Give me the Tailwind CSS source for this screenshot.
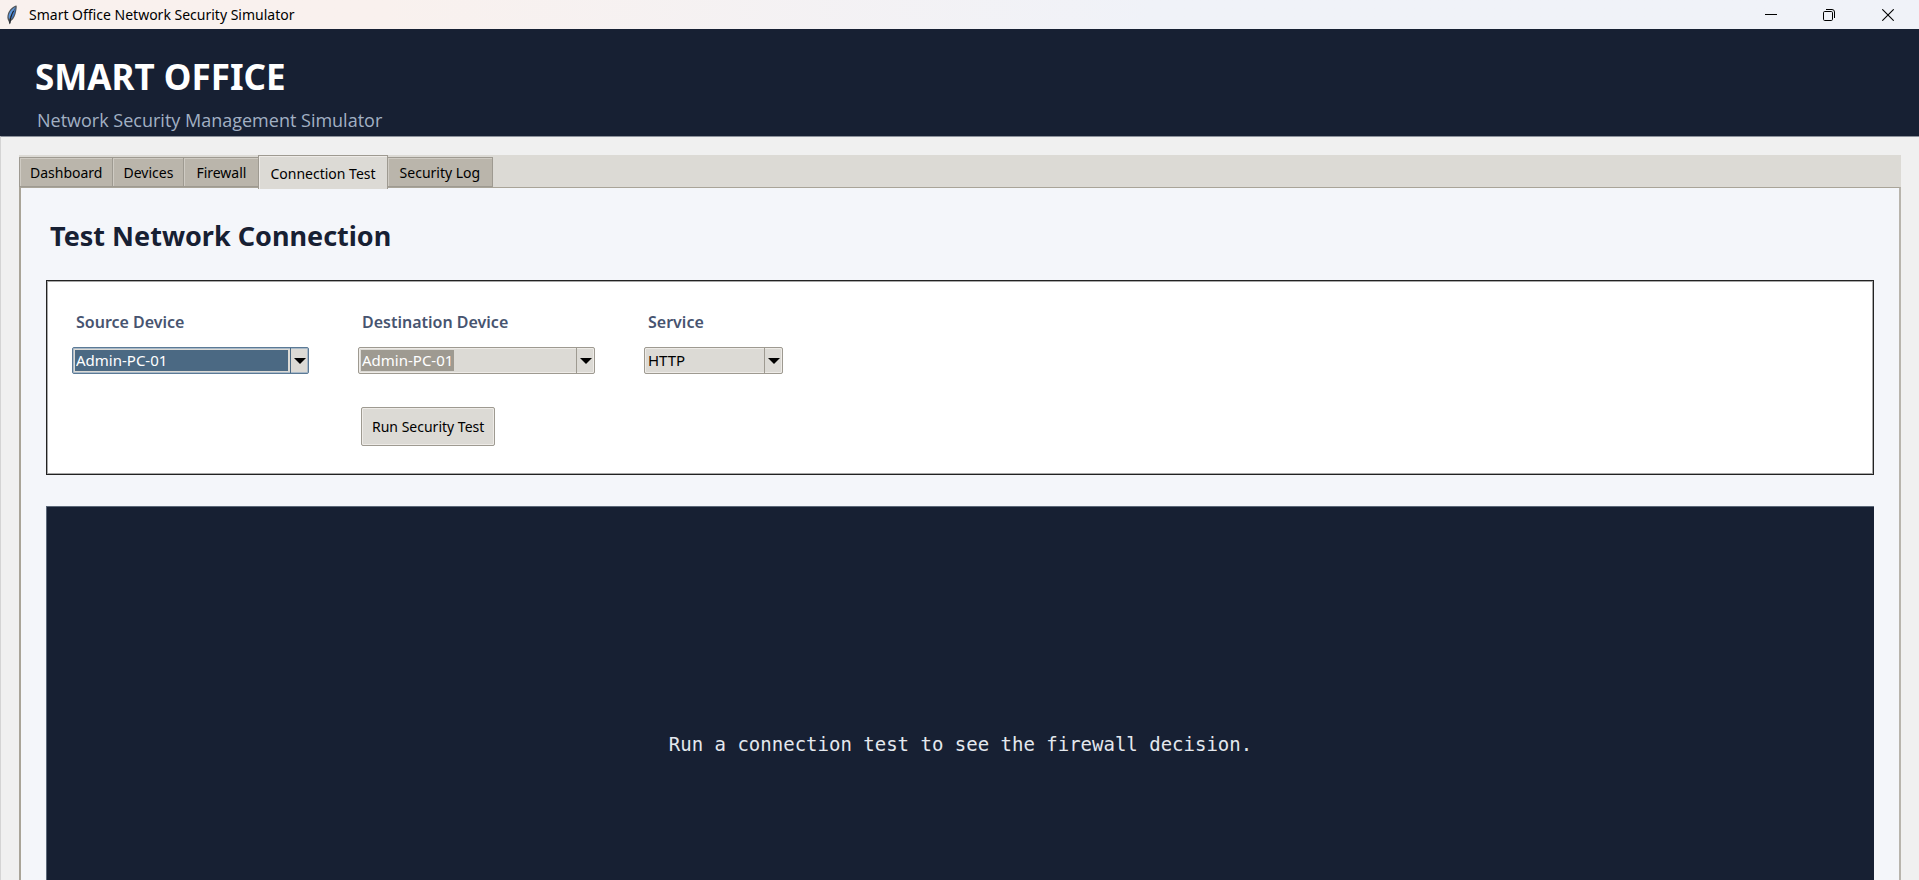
<!DOCTYPE html>
<html lang="en">
<head>
<meta charset="utf-8">
<title>Smart Office Network Security Simulator</title>
<script src="https://cdn.jsdelivr.net/npm/@tailwindcss/browser@4"></script>
</head>
<body class="flex h-screen flex-col overflow-hidden bg-[#f0f0f0] font-['Noto_Sans',sans-serif] text-black">

<!-- Window title bar -->
<div class="flex h-[29px] shrink-0 items-center bg-linear-to-r from-[#f9f1ee] from-20% to-[#f0f2f8] to-60% pl-1.5">
  <svg class="h-5 w-3" viewBox="0 0 12 20" aria-hidden="true">
    <path d="M10.500 .5C7 1 3.500 4.500 2 8.500 1 11.500 1.200 14 2.500 16L3.800 19.500 5 16C8 14 9.500 10 10.200 6 10.600 3.500 11 1.500 10.500 .5Z" fill="#4f5358"/>
    <path d="M9.800 1.800C7 3 4 6 3 9.200 2.400 11.500 2.600 13 3.200 14.200 4.500 11 6.500 6.500 9.800 1.800Z" fill="#5c97dc"/>
    <path d="M9.900 2.500C7.500 6.500 5.500 10.500 4.300 14.800 7 13.300 8.500 9.500 9.200 6Z" fill="#3f78c4"/>
    <path d="M7.500 6C5.800 9 4.500 12 3.800 18.500" fill="none" stroke="#14171c"/>
  </svg>
  <span class="ml-[11px] text-sm">Smart Office Network Security Simulator</span>
  <div class="ml-auto flex h-full">
    <button type="button" aria-label="Minimize" class="flex w-[60px] items-center justify-center">
      <svg class="size-3" viewBox="0 0 12 12"><path d="M0 5.500H12" stroke="#000"/></svg>
    </button>
    <button type="button" aria-label="Restore" class="flex w-14 items-center justify-center">
      <svg class="size-3" viewBox="0 0 12 12" fill="none" stroke="#000"><rect x=".5" y="2.500" width="9" height="9" rx="1.200"/><path d="M3 .5H9A2.500 2.500 0 0 1 11.500 3V9"/></svg>
    </button>
    <button type="button" aria-label="Close" class="flex w-[62px] items-center justify-center">
      <svg class="size-3" viewBox="0 0 12 12"><path d="M.3 .3 11.700 11.700M11.700 .3 .3 11.700" stroke="#000" stroke-width="1.100"/></svg>
    </button>
  </div>
</div>

<!-- Application header -->
<header class="flex h-[107px] shrink-0 flex-col overflow-hidden bg-[#172033] pt-6 pl-[35px]">
  <h1 class="text-[35px] leading-[48px] font-bold text-white">SMART OFFICE</h1>
  <p class="mt-1 pl-0.5 font-['Open_Sans',sans-serif] text-lg leading-[30px] text-[#a2b0c4]">Network Security Management Simulator</p>
</header>

<main class="flex min-h-0 flex-1 flex-col border-t border-l border-t-[#8c919b] border-l-[#d4d4d4] px-[18px] pt-[18px]">
  <!-- Notebook tabs -->
  <div role="tablist" class="flex h-8 shrink-0 items-end bg-[#dcdad5] text-sm">
    <button type="button" role="tab" class="h-[30px] border border-[#9e9a91] bg-[#bab5ab] px-[10px] pt-0.5 shadow-[inset_1px_1px_#cfcbc3]">Dashboard</button>
    <button type="button" role="tab" class="h-[30px] border-y border-r border-[#9e9a91] bg-[#bab5ab] px-[10px] pt-0.5 shadow-[inset_1px_1px_#cfcbc3]">Devices</button>
    <button type="button" role="tab" class="h-[30px] border-y border-[#9e9a91] bg-[#bab5ab] px-3 pt-0.5 shadow-[inset_1px_1px_#cfcbc3]">Firewall</button>
    <button type="button" role="tab" aria-selected="true" class="z-10 -mb-0.5 h-[34px] self-start border-x border-t border-[#9e9a91] bg-[#dcdad5] px-[11px] pt-1 pb-0.5 shadow-[inset_1px_1px_#eeebe7]">Connection Test</button>
    <button type="button" role="tab" class="h-[30px] border-y border-r border-[#9e9a91] bg-[#bab5ab] px-3 pt-0.5 shadow-[inset_1px_1px_#cfcbc3]">Security Log</button>
  </div>

  <!-- Connection Test page -->
  <section class="min-h-0 flex-1 overflow-hidden border-x-2 border-t border-[#a9a498] border-r-[#b8b4ac] bg-[#f4f6fa] px-[25px] pt-7">
    <h2 class="pl-1 text-[27px] leading-[40px] font-bold text-[#172033]">Test Network Connection</h2>

    <form class="mt-6 h-[195px] border border-[#222222] bg-white pt-7 pl-[25px] shadow-[inset_0_0_0_1px_#a8a8a8]" onsubmit="return false">
      <div class="flex gap-[49px] text-[15px]">
        <div class="flex w-[237px] flex-col gap-3">
          <label for="source" class="pl-1 text-base leading-[26px] font-semibold text-[#475470]">Source Device</label>
          <div class="relative flex h-[27px] rounded-xs border border-[#5b7a96] bg-[#dcdad5] p-0.5 shadow-[inset_0_0_0_1px_#a9b9c8]">
            <select id="source" class="mr-[18px] flex-1 appearance-none bg-[#4b6983] pl-px leading-[21px] text-white outline-none">
              <option>Admin-PC-01</option>
            </select>
            <span class="pointer-events-none absolute inset-y-0 right-0 flex w-[18px] items-center justify-center border-l border-[#4b6983]">
              <svg class="h-1.5 w-3" viewBox="0 0 12 6"><path d="M0 0H12L6 6Z"/></svg>
            </span>
          </div>
        </div>
        <div class="flex w-[237px] flex-col gap-3">
          <label for="destination" class="pl-1 text-base leading-[26px] font-semibold text-[#475470]">Destination Device</label>
          <div class="relative flex h-[27px] rounded-xs border border-[#9e9a91] bg-[#dcdad5] p-0.5 shadow-[inset_0_0_0_1px_#eeebe7]">
            <select id="destination" class="mr-[18px] flex-1 appearance-none bg-linear-to-r from-[#9e9a91] to-[#9e9a91] bg-[length:93px_100%] bg-no-repeat pl-px leading-[21px] text-white outline-none">
              <option>Admin-PC-01</option>
            </select>
            <span class="pointer-events-none absolute inset-y-0 right-0 flex w-[18px] items-center justify-center border-l border-[#9e9a91]">
              <svg class="h-1.5 w-3" viewBox="0 0 12 6"><path d="M0 0H12L6 6Z"/></svg>
            </span>
          </div>
        </div>
        <div class="flex w-[139px] flex-col gap-3">
          <label for="service" class="pl-1 text-base leading-[26px] font-semibold text-[#475470]">Service</label>
          <div class="relative flex h-[27px] rounded-xs border border-[#9e9a91] bg-[#dcdad5] p-0.5 shadow-[inset_0_0_0_1px_#eeebe7]">
            <select id="service" class="mr-[18px] flex-1 appearance-none pl-px leading-[21px] text-black outline-none">
              <option>HTTP</option>
            </select>
            <span class="pointer-events-none absolute inset-y-0 right-0 flex w-[18px] items-center justify-center border-l border-[#9e9a91]">
              <svg class="h-1.5 w-3" viewBox="0 0 12 6"><path d="M0 0H12L6 6Z"/></svg>
            </span>
          </div>
        </div>
      </div>
      <button type="submit" class="mt-[33px] ml-[289px] h-[39px] rounded-xs border border-[#9e9a91] bg-[#dcdad5] px-[10px] text-sm shadow-[inset_0_0_0_1px_#eeebe7]">Run Security Test</button>
    </form>

    <!-- Result console; its lower part runs past the window -->
    <div class="mt-[31px] flex h-[476px] items-center justify-center border-t border-l border-[#5c6878] bg-[#172033]">
      <output class="font-['DejaVu_Sans_Mono',monospace] text-[19px] text-[#e4e8ee]">Run a connection test to see the firewall decision.</output>
    </div>
  </section>
</main>
</body>
</html>
